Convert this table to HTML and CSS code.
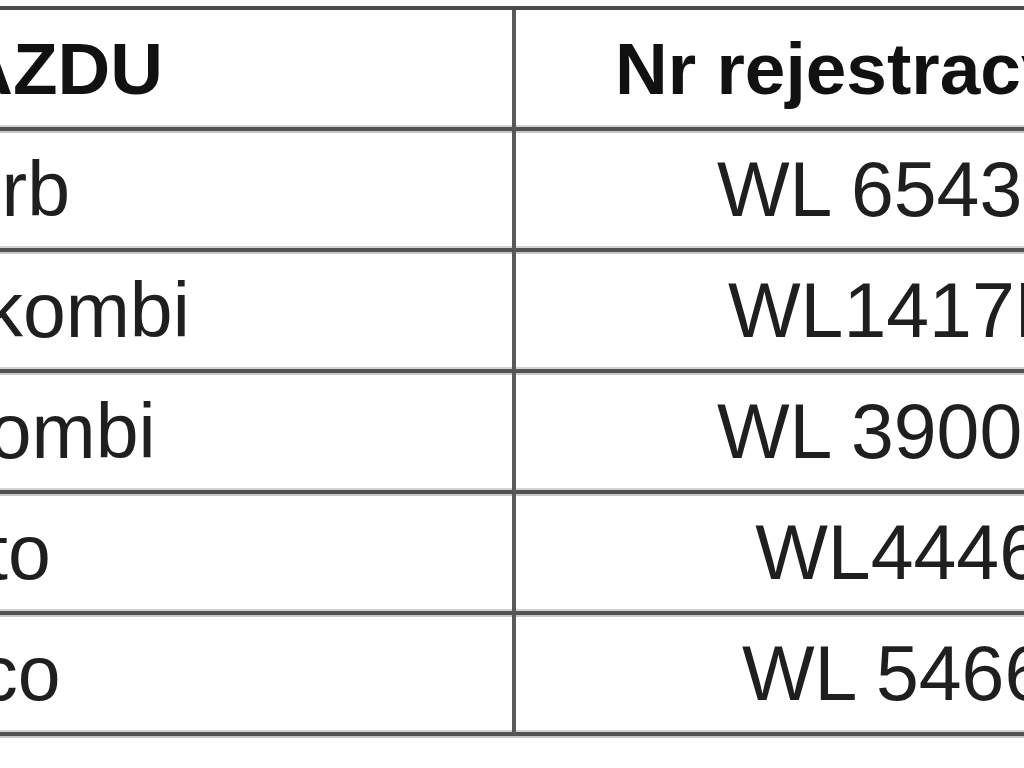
FILE: index.html
```html
<!DOCTYPE html>
<html lang="pl">
<head>
<meta charset="utf-8">
<title>Pojazdy</title>
<link rel="stylesheet" href="styles.css">
</head>
<body>
<div class="viewport">
  <div class="sheet">
    <div class="cell c1 head head-model">MARKA POJAZDU</div>
    <div class="cell c2 head">Nr rejestracyjny</div>

    <div class="cell c1">Skoda Superb</div>
    <div class="cell c2">WL 65432</div>

    <div class="cell c1">Skoda Octavia kombi</div>
    <div class="cell c2 nudge-s">WL1417E</div>

    <div class="cell c1">Skoda Fabia kombi</div>
    <div class="cell c2">WL 39004</div>

    <div class="cell c1">Fiat Seicento</div>
    <div class="cell c2 nudge-l">WL44465</div>

    <div class="cell c1 nudge-xs">Daewoo Tico</div>
    <div class="cell c2 nudge-m">WL 54665</div>
  </div>
</div>
</body>
</html>
```

FILE: styles.css
```css
html, body {
  margin: 0;
  padding: 0;
  background: #ffffff;
}

.viewport {
  width: 1024px;
  height: 768px;
  overflow: hidden;
  background: #ffffff;
}

.sheet {
  display: grid;
  grid-template-columns: 1376px 750px;
  width: 2126px;
  margin-left: -860px;
  margin-top: 6px;
  border-top: 4px solid #4a4a4a;
  font-family: "Liberation Sans", Arial, sans-serif;
}

.cell {
  height: 117px;
  box-sizing: content-box;
  border-bottom: 4px solid #525252;
  box-shadow: 0 2px 0 #c9c9c9, inset 0 -2px 0 #d2d2d2;
  display: flex;
  align-items: center;
  justify-content: center;
  font-size: 77px;
  line-height: 1;
  color: #1f1f1f;
  white-space: nowrap;
}

.c1 {
  border-right: 4px solid #5a5a5a;
}

.head {
  font-weight: bold;
  font-size: 73px;
  color: #111111;
}

.head-model {
  padding-left: 36px;
}

.nudge-xs {
  padding-left: 24px;
}

.nudge-s {
  padding-left: 12px;
}

.nudge-m {
  padding-left: 50px;
}

.nudge-l {
  padding-left: 58px;
}
```
